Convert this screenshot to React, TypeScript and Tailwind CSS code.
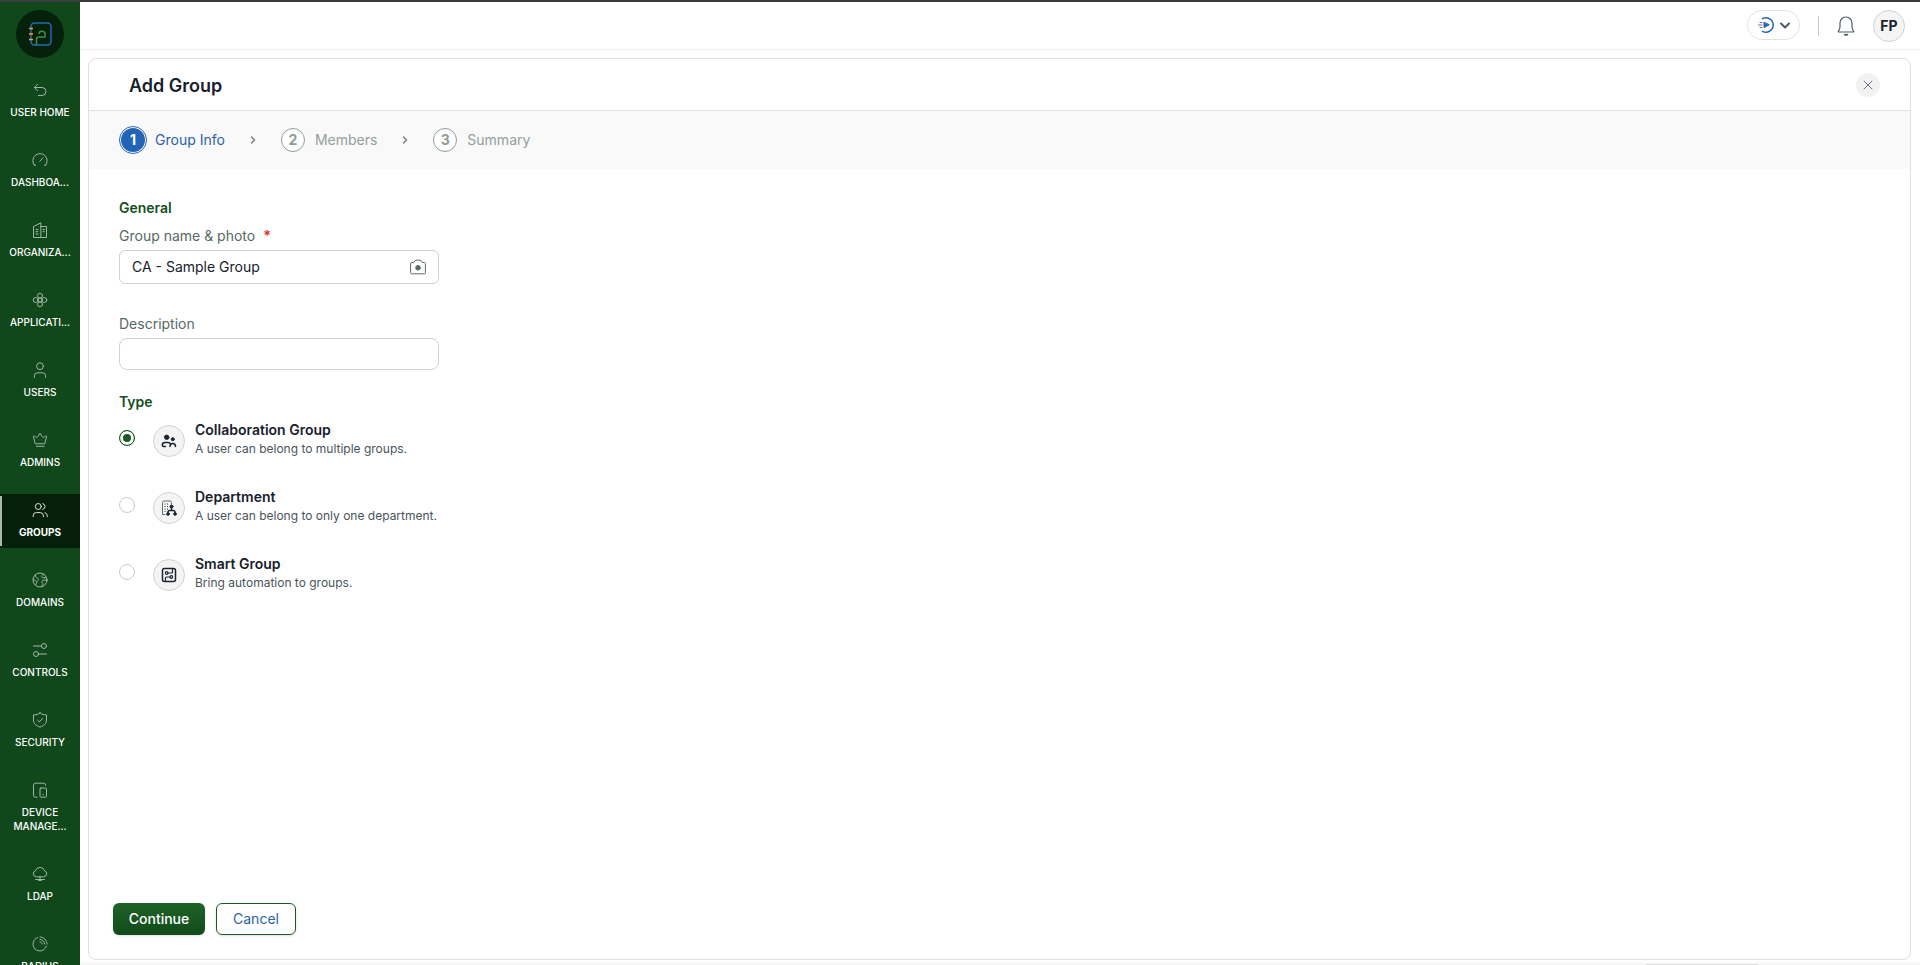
import React, { useState } from 'react'

const Icon = ({
  children,
  size = 16,
  className = '',
}: {
  children: React.ReactNode
  size?: number
  className?: string
}) => (
  <svg
    width={size}
    height={size}
    viewBox={`0 0 ${size} ${size}`}
    fill="none"
    stroke="currentColor"
    strokeLinecap="round"
    strokeLinejoin="round"
    aria-hidden="true"
    className={className}
  >
    {children}
  </svg>
)

const navItems = [
  {
    label: 'USER HOME',
    icon: <path d="M5.6 2.3 2.3 5.5l3.3 3.2M2.3 5.5H10a4 4 0 0 1 0 8H6.3" />,
  },
  {
    label: 'DASHBOA...',
    icon: <path d="M2.3 13.2a7.2 7.2 0 1 1 11.4 0M2.3 13.2h1.2M13.7 13.2h-1.2M7.8 9.3 11 5.8" />,
  },
  {
    label: 'ORGANIZA...',
    icon: (
      <>
        <path d="M8.5 15.5h-7V4.5L8.500 1zM8.500 4.500h6v11h-6" />
        <path d="M4 7.500h2M4 9.700h2M4 12h2M11 7.500h1.500M11 9.700h1.500" />
      </>
    ),
  },
  {
    label: 'APPLICATI...',
    icon: (
      <>
        <circle cx="8" cy="3.7" r="2.5" />
        <circle cx="8" cy="12.3" r="2.5" />
        <circle cx="3.7" cy="8" r="2.5" />
        <circle cx="12.3" cy="8" r="2.5" />
        <circle cx="8" cy="8" r="2.2" />
      </>
    ),
  },
  {
    label: 'USERS',
    icon: (
      <>
        <circle cx="8" cy="4.2" r="3.4" />
        <path d="M2.4 15.4v-1.6a3 3 0 0 1 3-3h5.2a3 3 0 0 1 3 3v1.6" />
      </>
    ),
  },
  {
    label: 'ADMINS',
    icon: (
      <path d="M3.2 11.4 1.5 5.2c-.6-1.4.8-1.8 1.3-.8.7 1.3 2.4 1.5 3 0L8 1.3l2.2 3.1c.6 1.5 2.3 1.3 3 0 .5-1 1.9-.6 1.3.8l-1.7 6.2zM4.5 14.3h7.6" />
    ),
  },
  {
    label: 'GROUPS',
    icon: (
      <>
        <circle cx="6.3" cy="4.5" r="3" />
        <path d="M1.2 14.7v-.9a3.2 3.2 0 0 1 3.2-3.2h3.8a3.2 3.2 0 0 1 3.2 3.2v.9M10.8 1.6a3 3 0 0 1 0 5.8M13 10.7c1.5.5 2.300 1.700 2.300 4" />
      </>
    ),
  },
  {
    label: 'DOMAINS',
    icon: (
      <>
        <circle cx="8" cy="8" r="7" />
        <path d="M3.5 2.6c-.3 2.3.6 2.8 2 3.5 1.6.9.9 2.2-.2 2.9-1 .7-.2 2.3-1.5 3.6M1.2 6.8l2.4 2.4M11.8 2.1c-1.9 1-2.7 2-1.8 3.2.8 1 2.3.2 4.5.3M15 8.5c-1.8-.9-4.5-.6-5 .8-.4 1.4 1 1.7.8 3-.1.9-.9 1.7-1.3 2.5" />
      </>
    ),
  },
  {
    label: 'CONTROLS',
    icon: (
      <>
        <path d="M1.5 4h8M6.5 12h8" />
        <circle cx="12" cy="4" r="2.5" />
        <circle cx="4" cy="12" r="2.5" />
      </>
    ),
  },
  {
    label: 'SECURITY',
    icon: (
      <>
        <path d="M8 .9c2 1.6 4 2 6.5 2v5c0 3.6-2.5 5.9-6.5 7.2C4 13.8 1.5 11.5 1.5 7.9v-5C4 2.9 6 2.5 8 .9z" />
        <path d="m5.6 8.2 1.7 1.7 3.3-3.5" />
      </>
    ),
  },
  {
    label: (
      <>
        DEVICE
        <br />
        MANAGE...
      </>
    ),
    icon: (
      <>
        <path d="M5 15.2H3.5a2 2 0 0 1-2-2v-10a2 2 0 0 1 2-2h8.2a2 2 0 0 1 2 2" />
        <rect x="8" y="6" width="6.5" height="9.2" rx="1" />
        <path d="M11 12.7h.5" />
      </>
    ),
  },
  {
    label: 'LDAP',
    icon: (
      <path d="M4 10.8a3.1 3.1 0 0 1-.6-6A4.8 4.8 0 0 1 12.6 4.8a3.1 3.1 0 0 1-.6 6zM8 10.8v2.7M3.5 13.500h2M10.500 13.500h2M6 13.500h4M6.800 14.500h2.400" />
    ),
  },
  {
    label: 'RADIUS',
    icon: (
      <path d="M5.5 1.6A6.9 6.900 0 1 0 14.500 10M8 1c3.800 0 7 3.200 7 7M8 3.400c2.500 0 4.600 2.100 4.600 4.600M8 5.800c1.200 0 2.200 1 2.200 2.200" />
    ),
  },
]

const Logo = () => (
  <svg width="24" height="26" viewBox="0 0 24 26" fill="none" aria-hidden="true">
    <rect x="3" y="2" width="20" height="22" rx="3.5" stroke="#2566b8" strokeWidth="1.5" />
    <path d="M1 7.500h4M1 13h4M1 18.500h4" stroke="#f0a030" strokeWidth="1.500" />
    <path
      d="M8.500 24v-5.500a2.500 2.500 0 0 1 2.500-2.500h6v-2.500a3 3 0 0 0-6-.5"
      stroke="#3f8a48"
      strokeWidth="1.500"
    />
  </svg>
)

const Sidebar = () => (
  <aside className="w-20 shrink-0 overflow-hidden bg-[#11481b]">
    <div className="mx-auto mt-2 flex size-12 items-center justify-center rounded-full bg-[#05210a]">
      <Logo />
    </div>
    <nav className="mt-4 flex flex-col gap-4">
      {navItems.map((item, i) => {
        const active = item.label === 'GROUPS'
        return (
          <a
            key={i}
            href="#"
            aria-current={active ? 'page' : undefined}
            className={`relative flex flex-col items-center gap-[7px] pt-2 pb-[9px] text-center text-[10px] leading-[14px] text-white ${
              active ? 'bg-[#052009] font-bold' : 'font-medium'
            }`}
          >
            {active && <span className="absolute inset-y-0.5 left-0 w-0.5 bg-[#aab8ad]" />}
            <Icon className={active ? 'text-[#dce5de]' : 'text-[#9fb6a4]'}>{item.icon}</Icon>
            <span>{item.label}</span>
          </a>
        )
      })}
    </nav>
  </aside>
)

const TopBar = () => (
  <header className="flex h-12 shrink-0 items-start justify-end border-b border-[#f1f1f1] pt-2 pr-[15px]">
    <button
      type="button"
      aria-label="Quick actions"
      className="flex h-[30px] w-[53px] items-center justify-center gap-1 rounded-full border border-[#e1e5e2]"
    >
      <Icon size={18} className="text-[#2264b8]">
        <path d="M5.500 2.700A7.200 7.200 0 1 1 5.500 15.300" strokeWidth="1.500" />
        <path d="M7 6.500v5l5-2.500z" fill="currentColor" />
        <path d="M3 6.500h2M1.500 9h3.500M3 11.500h2" stroke="#66758a" />
      </Icon>
      <Icon size={12} className="text-[#4d5866]">
        <path d="m2 4.500 4 4 4-4" strokeWidth="2" />
      </Icon>
    </button>
    <span className="mt-1.5 ml-[18px] h-5 w-px bg-[#c9cdca]" />
    <button type="button" aria-label="Notifications" className="mt-1.5 ml-[17px] text-[#4d5c63]">
      <Icon size={20}>
        <path
          d="M2.500 15C3.600 13.800 4 12.700 4 10.500V7a5.900 5.900 0 0 1 6-6 5.900 5.900 0 0 1 6 6v3.500c0 2.200.4 3.300 1.500 4.500.6.500.2 1-.4 1H2.900c-.6 0-1-.5-.4-1z"
          strokeWidth="1.200"
        />
        <path d="M8.500 18.500c.9.500 2.100.5 3 0" strokeWidth="1.500" />
      </Icon>
    </button>
    <button
      type="button"
      className="ml-[17px] size-8 rounded-full border border-[#ccd6d0] bg-[#f4f5f4] text-sm font-bold text-[#1b232c]"
    >
      FP
    </button>
  </header>
)

const Chevron = () => (
  <Icon size={10} className="mx-[23px] text-[#77837f]">
    <path d="m3.500 2 3 3-3 3" strokeWidth="1.500" />
  </Icon>
)

const Step = ({ number, title }: { number: number; title: string }) => (
  <li className="flex items-center">
    <Chevron />
    <span className="flex size-6 items-center justify-center rounded-full border border-[#8f9c98] bg-white text-sm font-bold text-[#8f9c98]">
      {number}
    </span>
    <span className="ml-2.5 text-[#93a09c]">{title}</span>
  </li>
)

const groupTypes = [
  {
    id: 'collaboration',
    title: 'Collaboration Group',
    description: 'A user can belong to multiple groups.',
    icon: (
      <>
        <circle cx="5.700" cy="4.300" r="2.200" fill="currentColor" />
        <circle cx="11.700" cy="6.200" r="1.500" fill="currentColor" />
        <path
          d="M4.500 13.500H2.800a1.500 1.500 0 0 1-1.500-1.500c0-1.500 1.200-2.500 2.700-2.500h3c1.300 0 2.200.6 2.500 1.700M9 13.500c0-2 1-3 2.700-3s2.800 1 2.800 3"
          strokeWidth="1.500"
        />
      </>
    ),
  },
  {
    id: 'department',
    title: 'Department',
    description: 'A user can belong to only one department.',
    icon: (
      <>
        <path
          d="M4 14.500H1.500V2.500a1.500 1.500 0 0 1 1.500-1.500h6a1.500 1.500 0 0 1 1.500 1.500V4"
          stroke="#5f6f6b"
        />
        <path d="M4 4h.1M6.500 4h.1M4 6.500h.1M6.500 6.500h.1M4 9h.1M6.500 9h.1M4 11.500h.1" />
        <circle cx="10.500" cy="6.500" r="1.500" fill="currentColor" />
        <path d="M10.500 7.500v3M7 13.500v-1.500a1.500 1.500 0 0 1 1.500-1.500h4a1.500 1.500 0 0 1 1.500 1.500v1.500" strokeWidth="1.500" />
        <circle cx="7" cy="14" r="1.300" fill="currentColor" />
        <circle cx="14" cy="14" r="1.300" fill="currentColor" />
      </>
    ),
  },
  {
    id: 'smart',
    title: 'Smart Group',
    description: 'Bring automation to groups.',
    icon: (
      <>
        <rect x="1.500" y="1.500" width="13" height="13" rx="2" strokeWidth="1.500" />
        <circle cx="5.700" cy="6" r="1.300" strokeWidth="1.200" />
        <circle cx="10.300" cy="10" r="1.300" strokeWidth="1.200" />
        <path
          d="M7 6h3.500a1 1 0 0 0 1-1V2M9 10H5.500a1 1 0 0 0-1 1v3"
          strokeWidth="1.200"
        />
      </>
    ),
  },
]

const App = () => {
  const [name, setName] = useState('CA - Sample Group')
  const [description, setDescription] = useState('')
  const [type, setType] = useState('collaboration')

  return (
    <div className="flex h-screen flex-col overflow-hidden border-t-2 border-[#3c3b3d] bg-white font-['Inter',sans-serif] text-sm text-[#18202b]">
      <div className="flex min-h-0 flex-1">
        <Sidebar />
        <div className="flex min-w-0 flex-1 flex-col">
          <TopBar />

          <main className="mt-2 mr-[9px] ml-2 flex min-h-0 flex-1 flex-col overflow-hidden rounded-lg border border-[#d9e4de]">
            <div className="flex h-[52px] shrink-0 items-center justify-between border-b border-[#dfe4e1] pr-[30px] pl-10">
              <h1 className="pt-0.5 text-lg font-semibold">Add Group</h1>
              <button
                type="button"
                aria-label="Close"
                className="flex size-6 items-center justify-center rounded-full bg-[#f2f2f2] text-[#66707f]"
              >
                <Icon size={12}>
                  <path d="m2 2 8 8M10 2l-8 8" />
                </Icon>
              </button>
            </div>

            <ol className="flex h-[58px] shrink-0 items-center bg-[#f9f9f9] pl-[30px]">
              <li className="flex items-center" aria-current="step">
                <span className="flex size-7 items-center justify-center rounded-full border border-[#2264b5] bg-white p-px">
                  <span className="flex size-6 items-center justify-center rounded-full bg-[#2264b5] font-bold text-white">
                    1
                  </span>
                </span>
                <span className="ml-2 text-[#2b62a8]">Group Info</span>
              </li>
              <Step number={2} title="Members" />
              <Step number={3} title="Summary" />
            </ol>

            <form className="flex min-h-0 flex-1 flex-col" onSubmit={(e) => e.preventDefault()}>
              <div className="min-h-0 flex-1 pt-[29px] pl-[30px]">
                <h2 className="font-semibold text-[#15501f]">General</h2>
                <label htmlFor="group-name" className="mt-2 block text-[#566965]">
                  Group name &amp; photo <span className="ml-1 font-bold text-[#e5332c]">*</span>
                </label>
                <div className="mt-1 flex h-[34px] w-80 items-center rounded-md border border-[#cfd1d0] px-3">
                  <input
                    id="group-name"
                    value={name}
                    onChange={(e) => setName(e.target.value)}
                    className="min-w-0 flex-1 outline-none"
                  />
                  <button type="button" aria-label="Upload photo" className="text-[#5a6b67]">
                    <Icon size={16}>
                      <path d="M.6 4.500a1 1 0 0 1 1-1h2.200L5.500 1.200h5l1.700 2.300h2.200a1 1 0 0 1 1 1v9.300a1 1 0 0 1-1 1H1.600a1 1 0 0 1-1-1z" />
                      <circle cx="8" cy="8.800" r="2.300" fill="currentColor" />
                    </Icon>
                  </button>
                </div>

                <label htmlFor="group-description" className="mt-[30px] block text-[#566965]">
                  Description
                </label>
                <input
                  id="group-description"
                  value={description}
                  onChange={(e) => setDescription(e.target.value)}
                  className="mt-1 block h-8 w-80 rounded-lg border border-[#cfd1d0] px-3 outline-none"
                />

                <h2 className="mt-[22px] font-semibold text-[#15501f]">Type</h2>
                <div className="mt-2 flex flex-col gap-[27px]">
                  {groupTypes.map((item) => (
                    <div key={item.id} className="flex h-10 items-start">
                      <input
                        type="radio"
                        name="group-type"
                        id={item.id}
                        checked={type === item.id}
                        onChange={() => setType(item.id)}
                        className="mt-2.5 size-4 appearance-none rounded-full border border-[#c9cbca] bg-white checked:border-[#1a5b25] checked:bg-[#1a5b25] checked:shadow-[inset_0_0_0_3px_#fff]"
                      />
                      <label htmlFor={item.id} className="ml-[18px] flex">
                        <span className="mt-[5px] flex size-8 items-center justify-center rounded-full border border-[#ccd6d0] bg-[#f4f4f4] text-[#1b2430]">
                          <Icon>{item.icon}</Icon>
                        </span>
                        <span className="ml-2.5 flex flex-col">
                          <span className="leading-5 font-semibold">{item.title}</span>
                          <span className="text-xs leading-[18px] text-[#49545a]">
                            {item.description}
                          </span>
                        </span>
                      </label>
                    </div>
                  ))}
                </div>
              </div>

              <div className="flex shrink-0 gap-[11px] pb-6 pl-6">
                <button
                  type="submit"
                  className="h-8 w-23 rounded-md bg-linear-to-b from-[#1d6428] to-[#124a1b] font-medium text-white shadow-sm"
                >
                  Continue
                </button>
                <button
                  type="button"
                  className="h-8 w-20 rounded-md border border-[#1a5b25] text-[#2b62a8] shadow-sm"
                >
                  Cancel
                </button>
              </div>
            </form>
          </main>
          <div className="mt-px flex h-1 shrink-0 items-end justify-end bg-linear-to-b from-white to-[#f3f3f3] pr-[162px]">
            <span className="h-px w-28 bg-[#dcdcdc]" />
          </div>
        </div>
      </div>
    </div>
  )
}

export default App
